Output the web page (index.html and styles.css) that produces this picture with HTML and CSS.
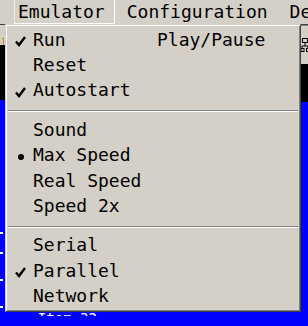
FILE: index.html
```html
<!DOCTYPE html>
<html lang="en">
<head>
    <meta charset="UTF-8">
    <title>Emulator menu</title>
    <link rel="stylesheet" href="styles.css">
</head>
<body>

    <div class="screen">
        <div class="menubar">
            <div class="bar-item open">Emulator</div>
            <div class="bar-item">Configuration</div>
            <div class="bar-item">Debug</div>
        </div>

        <div class="desk">
            <div class="strip left">
                <div class="tool"><span class="bracket"></span></div>
                <div class="dark"></div>
                <div class="blue">
                    <span class="tick t1"></span>
                    <span class="tick t2"></span>
                    <span class="tick t3"></span>
                    <span class="tick t4"></span>
                </div>
            </div>
            <div class="middle">
                <div class="log-line">&#9552; Item 32</div>
            </div>
            <div class="strip right">
                <div class="tool tall">
                    <svg class="net" width="8" height="16" viewBox="0 0 8 16">
                        <rect x="1.5" y="1.5" width="5" height="4" fill="none" stroke="#000"/>
                        <path d="M4 6v3M1 9h7M1 9v2M7 9v2" stroke="#000" fill="none"/>
                        <rect x="0" y="11.5" width="3" height="3" fill="none" stroke="#000"/>
                        <rect x="5.5" y="11.5" width="3" height="3" fill="none" stroke="#000"/>
                    </svg>
                </div>
                <div class="dark short"></div>
                <div class="blue"></div>
            </div>
        </div>

        <div class="menu">
            <div class="item">
                <span class="mark"><svg class="check" width="11" height="11" viewBox="0 0 11 11"><path d="M1 5.5 L4 9 L10 1" fill="none" stroke="#000" stroke-width="2.4"/></svg></span>
                <span class="label">Run</span>
                <span class="key">Play/Pause</span>
            </div>
            <div class="item">
                <span class="mark"></span>
                <span class="label">Reset</span>
            </div>
            <div class="item">
                <span class="mark"><svg class="check" width="11" height="11" viewBox="0 0 11 11"><path d="M1 5.5 L4 9 L10 1" fill="none" stroke="#000" stroke-width="2.4"/></svg></span>
                <span class="label">Autostart</span>
            </div>

            <div class="separator"></div>

            <div class="item">
                <span class="mark"></span>
                <span class="label">Sound</span>
            </div>
            <div class="item">
                <span class="mark"><span class="dot"></span></span>
                <span class="label">Max Speed</span>
            </div>
            <div class="item">
                <span class="mark"></span>
                <span class="label">Real Speed</span>
            </div>
            <div class="item">
                <span class="mark"></span>
                <span class="label">Speed 2x</span>
            </div>

            <div class="separator"></div>

            <div class="item">
                <span class="mark"></span>
                <span class="label">Serial</span>
            </div>
            <div class="item">
                <span class="mark"><svg class="check" width="11" height="11" viewBox="0 0 11 11"><path d="M1 5.5 L4 9 L10 1" fill="none" stroke="#000" stroke-width="2.4"/></svg></span>
                <span class="label">Parallel</span>
            </div>
            <div class="item">
                <span class="mark"></span>
                <span class="label">Network</span>
            </div>
        </div>
    </div>

</body>
</html>
```

FILE: styles.css
```css
/* General */
body {
    margin: 0;
    padding: 0;
    background-color: #0000ff;
    font-family: "DejaVu Sans Mono", "Liberation Mono", monospace;
    font-size: 18px;
    color: #000;
}

.screen {
    position: relative;
    width: 308px;
    height: 326px;
    overflow: hidden;
}

/* Menu bar */
.menubar {
    display: flex;
    height: 24px;
    padding-left: 14px;
    background-color: #d4d0c8;
    line-height: 24px;
    white-space: nowrap;
}

.bar-item {
    padding: 0 10px 0 4px;
    margin-right: 8px;
}

.bar-item.open {
    padding: 0 9px 0 3px;
    border-left: 1px solid #eeece8;
    border-right: 1px solid #fff;
    border-bottom: 1px solid #fff;
    height: 23px;
    line-height: 23px;
}

/* Background window */
.desk {
    display: flex;
    height: 301px;
    border-top: 1px solid #404040;
}

.strip {
    display: flex;
    flex-direction: column;
}

.strip.left {
    width: 5px;
}

.strip.right {
    width: 8px;
}

.middle {
    flex: 1;
    display: flex;
    flex-direction: column;
    justify-content: flex-end;
    overflow: hidden;
    background-color: #0000ff;
}

.tool {
    height: 20px;
    background-color: #d4d0c8;
}

.tool.tall {
    height: 39px;
    border-top: 1px solid #808080;
    box-sizing: border-box;
}

.bracket {
    display: block;
    width: 1px;
    height: 7px;
    margin: 13px 0 0 2px;
    border: 1px solid #c89000;
    border-left: none;
}

.net {
    display: block;
    margin: 11px 0 0 1px;
}

.dark {
    height: 55px;
    background-color: #000;
}

.dark.short {
    height: 38px;
}

.blue {
    flex: 1;
    background-color: #0000ff;
}

.tick {
    display: block;
    width: 3px;
    height: 2px;
    background-color: #fff;
}

.t1 { margin-top: 132px; }
.t2 { margin-top: 18px; }
.t3 { margin-top: 25px; }
.t4 { margin-top: 25px; }

.log-line {
    color: #fff;
    font-size: 14px;
    line-height: 14px;
    height: 5px;
    overflow: hidden;
    padding-left: 16px;
    margin-bottom: 10px;
    white-space: nowrap;
}

/* Dropdown menu */
.menu {
    position: absolute;
    left: 5px;
    top: 24px;
    width: 296px;
    box-sizing: border-box;
    padding: 1px 0 3px;
    background-color: #d4d0c8;
    border: 1px solid;
    border-color: #d4d0c8 #404040 #404040 #d4d0c8;
    box-shadow: inset 1px 1px 0 #fff, inset -1px -1px 0 #808080;
}

.item {
    display: flex;
    height: 25.4px;
    padding-top: 2.6px;
    box-sizing: border-box;
    line-height: 22.8px;
    white-space: nowrap;
}

.mark {
    width: 27px;
    display: flex;
    align-items: center;
    justify-content: center;
    padding-left: 1px;
    box-sizing: border-box;
}

.check {
    margin-top: 3px;
}

.dot {
    width: 6px;
    height: 6px;
    border-radius: 50%;
    background-color: #000;
    margin-top: 2px;
    margin-left: 2px;
}

.label {
    width: 124px;
}

.separator {
    display: flex;
    flex-direction: column;
    height: 14px;
    margin: 0 2px;
}

.separator::after {
    content: "";
    display: block;
    margin-top: 8px;
    height: 1px;
    border-top: 1px solid #808080;
    background-color: #fff;
}
```
